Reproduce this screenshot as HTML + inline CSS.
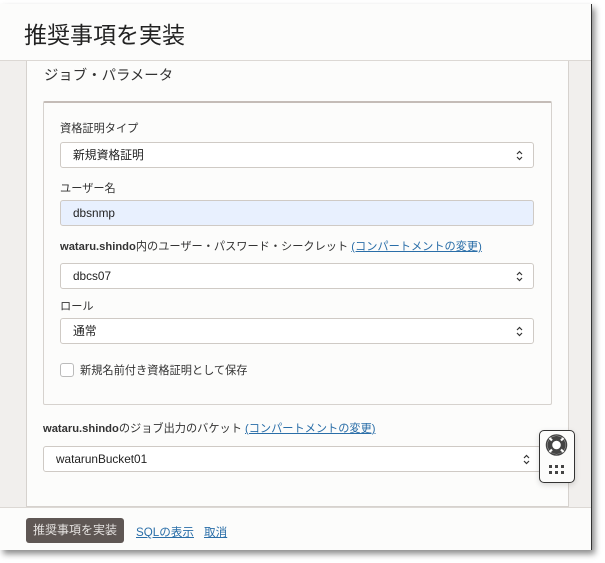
<!DOCTYPE html>
<html><head><meta charset="utf-8"><style>
*{box-sizing:border-box;margin:0;padding:0}
body{width:605px;height:563px;background:#fff;position:relative;overflow:hidden;font-family:"Liberation Sans","Noto Sans CJK JP",sans-serif;color:#333}
.frame{position:absolute;left:0;top:4px;width:592px;height:546px;background:#fcfcfb;border-right:1px solid #333;box-shadow:3px 4px 6px rgba(0,0,0,.45)}
.hdr{position:absolute;left:0;top:0;width:591px;height:57px;border-bottom:1px solid #dcd8d4;background:#fcfcfb}
.hdr h1{position:absolute;left:24px;top:12px;font-size:23px;font-weight:normal;color:#222}
.body{position:absolute;left:0;top:57px;width:591px;height:447px;background:#f1efed;border-bottom:1px solid #dcd8d4}
.panel{position:absolute;left:26px;top:0;width:543px;height:446px;background:#fcfcfb;border:1px solid #d6d2ce;border-top:none}
.abs{position:absolute}
.t{font-size:11.2px;color:#333}
.sel{position:absolute;height:26px;border:1px solid #cfcac5;border-radius:3px;background:#fff;font-size:11.8px;padding-left:12px;line-height:24px;color:#222}
.sel svg{position:absolute;right:10px;top:7px}
a{color:#2a6ea8;text-decoration:underline}
.foot{position:absolute;left:0;top:505px;width:591px;height:45px}
.btn{position:absolute;left:26px;top:9px;width:98px;height:25px;background:#5f5754;color:#e6e3e1;font-size:12px;line-height:25px;text-align:center;border-radius:3px}
</style></head><body>
<div class="frame">
 <div class="hdr"><h1>推奨事項を実装</h1></div>
 <div class="body">
  <div class="panel"></div>
  <div class="abs" style="left:44px;top:3px;font-size:14.4px;color:#333">ジョブ・パラメータ</div>
  <div class="abs" style="left:43px;top:40px;width:509px;height:304px;border:1px solid #d6d2ce;border-top:2px solid #c4bcb7;border-radius:2px;background:#fcfcfb"></div>
  <div class="abs t" style="left:60px;top:59px">資格証明タイプ</div>
  <div class="sel" style="left:60px;top:81px;width:474px">新規資格証明<svg width="7" height="11" viewBox="0 0 7 11"><path d="M1 4L3.5 1.5L6 4M1 7L3.5 9.5L6 7" fill="none" stroke="#333" stroke-width="1.2"/></svg></div>
  <div class="abs t" style="left:60px;top:119px">ユーザー名</div>
  <div class="sel" style="left:60px;top:139px;width:474px;background:#e8f0fe;">dbsnmp</div>
  <div class="abs t" style="left:60px;top:177px"><b>wataru.shindo</b>内のユーザー・パスワード・シークレット <a>(コンパートメントの変更)</a></div>
  <div class="sel" style="left:60px;top:202px;width:474px">dbcs07<svg width="7" height="11" viewBox="0 0 7 11"><path d="M1 4L3.5 1.5L6 4M1 7L3.5 9.5L6 7" fill="none" stroke="#333" stroke-width="1.2"/></svg></div>
  <div class="abs t" style="left:60px;top:237px">ロール</div>
  <div class="sel" style="left:60px;top:257px;width:474px">通常<svg width="7" height="11" viewBox="0 0 7 11"><path d="M1 4L3.5 1.5L6 4M1 7L3.5 9.5L6 7" fill="none" stroke="#333" stroke-width="1.2"/></svg></div>
  <div class="abs" style="left:60px;top:302px;width:14px;height:14px;border:1px solid #bbb;border-radius:3px;background:#fff"></div>
  <div class="abs t" style="left:80px;top:301px">新規名前付き資格証明として保存</div>
  <div class="abs t" style="left:43px;top:359px"><b>wataru.shindo</b>のジョブ出力のバケット <a>(コンパートメントの変更)</a></div>
  <div class="sel" style="left:43px;top:385px;width:498px">watarunBucket01<svg width="7" height="11" viewBox="0 0 7 11"><path d="M1 4L3.5 1.5L6 4M1 7L3.5 9.5L6 7" fill="none" stroke="#333" stroke-width="1.2"/></svg></div>
  <div class="abs" style="left:539px;top:369px;width:36px;height:53px;border:1.5px solid #333;border-radius:5px;background:#fcfcfb;box-shadow:0 2px 6px rgba(0,0,0,.15)">
   <svg width="33" height="50" viewBox="0 0 33 50" style="position:absolute;left:0;top:0">
    <circle cx="16.5" cy="14" r="10" fill="none" stroke="#444" stroke-width="1.5"/>
    <circle cx="16.5" cy="14" r="7" fill="none" stroke="#444" stroke-width="4"/>
    <g stroke="#fcfcfb" stroke-width="2.2"><path d="M9.5 7L12 9.5M23.5 7L21 9.5M9.5 21L12 18.5M23.5 21L21 18.5"/></g>
    <circle cx="16.5" cy="14" r="4.8" fill="#fff" stroke="#444" stroke-width="1"/>
    <g fill="#444"><rect x="9" y="34" width="3" height="3"/><rect x="15" y="34" width="3" height="3"/><rect x="21" y="34" width="3" height="3"/><rect x="9" y="40" width="3" height="3"/><rect x="15" y="40" width="3" height="3"/><rect x="21" y="40" width="3" height="3"/></g>
   </svg>
  </div>
 </div>
 <div class="foot">
  <div class="btn">推奨事項を実装</div>
  <div class="abs" style="left:136px;top:15px;font-size:11.6px"><a>SQLの表示</a></div>
  <div class="abs" style="left:204px;top:15px;font-size:11.6px"><a>取消</a></div>
 </div>
</div>
</body></html>
